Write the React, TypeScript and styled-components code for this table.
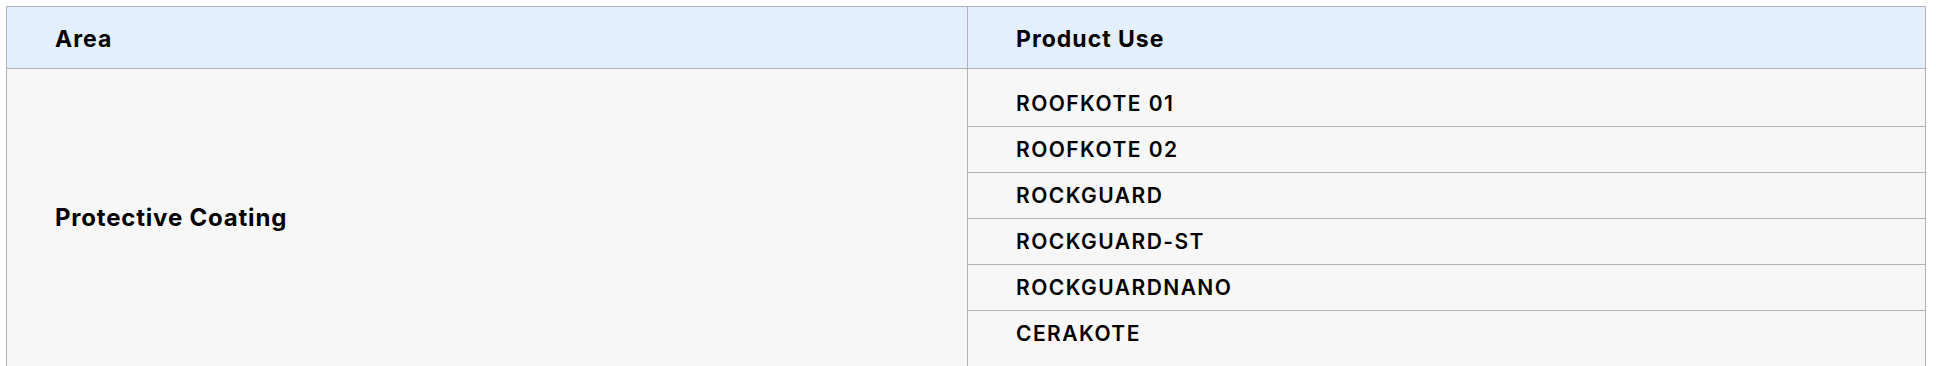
import React from 'react'
import styled, { createGlobalStyle } from 'styled-components'

const GlobalStyle = createGlobalStyle`
  * {
    box-sizing: border-box;
  }

  body {
    margin: 0;
    background-color: #fff;
    font-family: Inter, 'Noto Sans', 'Liberation Sans', sans-serif;
    color: #000;
  }
`

const TableWrapper = styled.div`
  width: 1920px;
  margin: 6px;
  border: 1px solid #b3b3b3;
  border-bottom: none;
`

const HeaderRow = styled.div`
  display: grid;
  grid-template-columns: 960px 1fr;
  height: 62px;
  background-color: #e3effe;
  border-bottom: 1px solid #b3b3b3;
`

const HeaderCell = styled.div<{ $divider?: boolean }>`
  display: flex;
  align-items: center;
  padding: 2px 48px 0;
  font-size: 23px;
  font-weight: 700;
  letter-spacing: 1px;
  border-left: ${({ $divider }) => ($divider ? '1px solid #b3b3b3' : 'none')};
`

const BodyRow = styled.div`
  display: grid;
  grid-template-columns: 960px 1fr;
  background-color: #f7f7f7;
`

const AreaCell = styled.div`
  display: flex;
  align-items: center;
  padding: 0 48px 2px;
  font-size: 24px;
  font-weight: 700;
  letter-spacing: 0.8px;
`

const ProductList = styled.ul`
  margin: 0;
  padding: 11px 0 12px;
  list-style: none;
  border-left: 1px solid #b3b3b3;
`

const ProductItem = styled.li`
  display: flex;
  align-items: center;
  height: 46px;
  padding: 0 48px;
  font-size: 21px;
  font-weight: 600;
  letter-spacing: 1.45px;

  & + & {
    border-top: 1px solid #b3b3b3;
  }
`

const products = [
  'ROOFKOTE 01',
  'ROOFKOTE 02',
  'ROCKGUARD',
  'ROCKGUARD-ST',
  'ROCKGUARDNANO',
  'CERAKOTE',
]

const App = () => {
  return (
    <>
      <GlobalStyle />
      <TableWrapper>
        <HeaderRow>
          <HeaderCell>Area</HeaderCell>
          <HeaderCell $divider>Product Use</HeaderCell>
        </HeaderRow>

        <BodyRow>
          <AreaCell>Protective Coating</AreaCell>
          <ProductList>
            {products.map((name) => (
              <ProductItem key={name}>{name}</ProductItem>
            ))}
          </ProductList>
        </BodyRow>
      </TableWrapper>
    </>
  )
}

export default App
